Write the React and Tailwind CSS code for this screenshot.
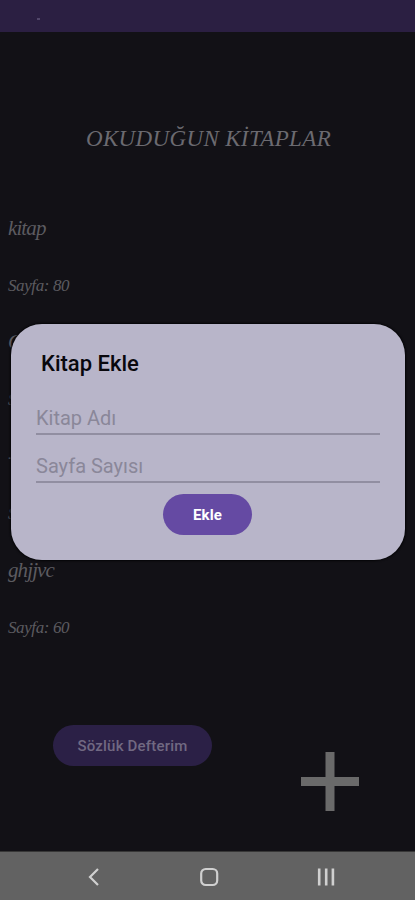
// Reading list screen with the "add book" dialog open on top.

const SCRIPT_FONT = "font-['Liberation_Serif',serif] italic";

const books = [
  { id: 1, title: 'kitap', pages: 80 },
  { id: 2, title: 'C', pages: 80 },
  { id: 3, title: '-', pages: 60 },
  { id: 4, title: 'ghjjvc', pages: 60 },
];

function StatusBar() {
  return (
    <header className="h-8 flex-none bg-[#2b1f42] pl-[37px] pt-[18px]">
      <span className="block h-0.5 w-[3px] bg-[#52476a]" />
    </header>
  );
}

function BookRow({ title, pages }) {
  return (
    <li className={`${SCRIPT_FONT} text-[#5c5b60]`}>
      <p className="flex h-[57px] items-center text-[21px] leading-none tracking-[-0.9px]">{title}</p>
      <p className="flex h-[57px] items-center text-[17px] leading-none tracking-[-0.4px]">
        Sayfa: {pages}
      </p>
    </li>
  );
}

function Field({ label }) {
  return (
    <input
      type="text"
      placeholder={label}
      aria-label={label}
      className="block h-12 w-full border-b-2 border-[#918ea1] bg-transparent pt-4 text-[20px] leading-7 outline-none placeholder:text-[#8a8799] placeholder:opacity-100"
    />
  );
}

function AddBookDialog() {
  return (
    <div
      role="dialog"
      aria-label="Kitap Ekle"
      className="absolute left-[11px] top-[324px] flex h-[236px] w-[394px] flex-col rounded-[31px] bg-[#b8b5c9] pl-[25px] pr-[25px] pt-[25px] shadow-[0_0_2px_1px_#050507]"
    >
      <h2 className="pl-[5px] text-[22px] font-medium leading-[30px] text-[#09080d]">Kitap Ekle</h2>
      <div className="mt-2">
        <Field label="Kitap Adı" />
        <Field label="Sayfa Sayısı" />
      </div>
      <button
        type="button"
        className="mr-px mt-[11px] h-[41px] w-[89px] self-center rounded-full bg-[#654aa3] pt-0.5 text-[15px] font-bold tracking-[0.1px] text-white"
      >
        Ekle
      </button>
    </div>
  );
}

function NavBar() {
  return (
    <nav className="flex h-[49px] flex-none items-center border-t border-[#373737] bg-[#626262] pt-0.5 text-[#d0d0d0]">
      <svg className="ml-[87px] h-5 w-[13px]" viewBox="0 0 13 20" fill="none" stroke="currentColor" strokeWidth="2.2">
        <path d="M11 2 3 10l8 8" />
      </svg>
      <svg className="ml-[99px] h-5 w-5" viewBox="0 0 20 20" fill="none" stroke="currentColor" strokeWidth="2.2">
        <rect x="2.2" y="2" width="16" height="16" rx="4.5" />
      </svg>
      <svg className="ml-[98px] h-5 w-[18px]" viewBox="0 0 18 20" fill="none" stroke="currentColor" strokeWidth="2.6">
        <path d="M2.2 1.5v17M9.2 1.5v17M15.9 1.5v17" />
      </svg>
    </nav>
  );
}

export default function App() {
  return (
    <div className="relative flex h-[900px] w-full flex-col overflow-hidden bg-[#121116] font-['Roboto',sans-serif]">
      <StatusBar />
      <main className="flex flex-1 flex-col">
        <h1 className={`${SCRIPT_FONT} mt-[91px] pl-0.5 text-center text-[23px] leading-8 tracking-[0.35px] text-[#6b6a70]`}>
          OKUDUĞUN KİTAPLAR
        </h1>
        <ul className="mt-[45px] pl-2">
          {books.map((book) => (
            <BookRow key={book.id} title={book.title} pages={book.pages} />
          ))}
        </ul>
        <div className="mt-[69px] flex">
          <button
            type="button"
            className="ml-[53px] h-[41px] w-[159px] rounded-full bg-[#2b2046] pt-0.5 text-[15px] font-medium tracking-[0.2px] text-[#716982]"
          >
            Sözlük Defterim
          </button>
          <button type="button" aria-label="Kitap ekle" className="ml-[89px] mt-[27px]">
            <svg className="h-[59px] w-[58px]" viewBox="0 0 58 59" fill="none" stroke="#6a6a6a" strokeWidth="9">
              <path d="M29 0v59M0 29.5h58" />
            </svg>
          </button>
        </div>
      </main>
      <NavBar />
      <AddBookDialog />
    </div>
  );
}
